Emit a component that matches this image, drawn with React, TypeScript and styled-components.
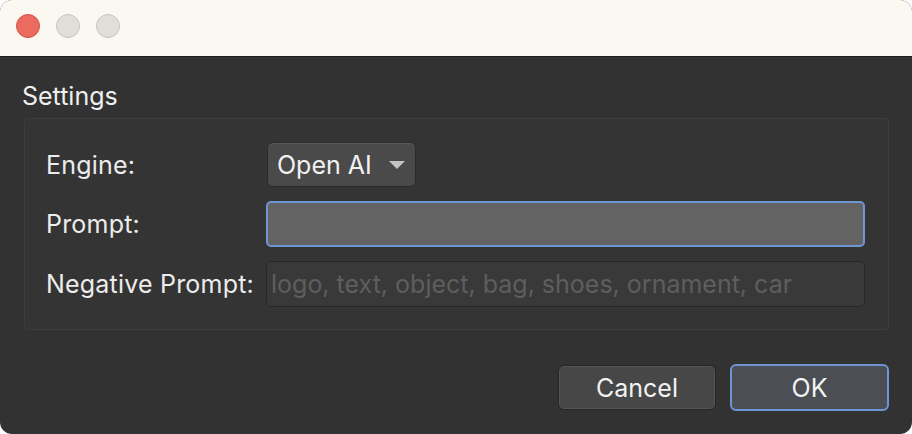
import React from "react";
import styled, { createGlobalStyle } from "styled-components";

const Global = createGlobalStyle`
  html, body { margin: 0; padding: 0; background: #ffffff; }
  body { font-family: Inter, "Noto Sans", "Liberation Sans", sans-serif; }
`;

const Window = styled.div`
  width: 912px;
  height: 434px;
  border-radius: 12px;
  overflow: hidden;
  background: #323232;
  display: flex;
  flex-direction: column;
`;

const TitleBar = styled.div`
  height: 57px;
  flex: none;
  background: #fbf7f1;
  border-bottom: 1px solid #1d1d1d;
  display: flex;
  align-items: center;
  gap: 16px;
  padding-left: 16px;
  box-sizing: border-box;
  padding-bottom: 4px;
`;

const Light = styled.span<{ $c: string; $b: string }>`
  width: 24px;
  height: 24px;
  border-radius: 50%;
  background: ${(p) => p.$c};
  box-sizing: border-box;
  border: 1px solid ${(p) => p.$b};
`;

const Body = styled.div`
  flex: 1;
  padding: 0 23px 0 24px;
  display: flex;
  flex-direction: column;
  color: #ececec;
`;

const GroupTitle = styled.div`
  font-size: 25px;
  line-height: 30px;
  margin: 24px 0 7px -2px;
  color: #efefef;
`;

const Group = styled.div`
  border: 1px solid #3d3d3d;
  background: #343434;
  border-radius: 4px;
  padding: 23px 23px 22px 21px;
  display: grid;
  grid-template-columns: 220px 1fr;
  row-gap: 14px;
  align-items: center;
`;

const Label = styled.div`
  font-size: 25px;
  letter-spacing: 0.2px;
  color: #ececec;
`;

const Select = styled.div`
  justify-self: start;
  width: 149px;
  height: 45px;
  box-sizing: border-box;
  border-radius: 6px;
  background: #4a4a4a;
  border: 1px solid #2a2a2a;
  box-shadow: inset 0 1px 0 #5a5a5a;
  display: flex;
  align-items: center;
  justify-content: space-between;
  padding: 0 10px 0 9px;
  font-size: 25px;
  color: #f2f2f2;
  margin-left: 1px;
`;

const Arrow = styled.span`
  width: 0;
  height: 0;
  border-left: 8px solid transparent;
  border-right: 8px solid transparent;
  border-top: 8px solid #c4c4c4;
  margin-top: 1px;
`;

const Field = styled.input<{ $focus?: boolean }>`
  height: 46px;
  box-sizing: border-box;
  width: 100%;
  border-radius: 5px;
  font-family: inherit;
  font-size: 25px;
  padding: 0 4px;
  outline: none;
  color: #eee;
  background: ${(p) => (p.$focus ? "#636363" : "#393939")};
  border: ${(p) => (p.$focus ? "2px solid #6e96d3" : "1px solid #272727")};
  &::placeholder { color: #5e5e5e; }
`;

const Footer = styled.div`
  display: flex;
  justify-content: flex-end;
  gap: 14px;
  margin-top: 34px;
`;

const Button = styled.button<{ $primary?: boolean }>`
  width: ${(p) => (p.$primary ? "159px" : "158px")};
  height: ${(p) => (p.$primary ? "47px" : "45px")};
  margin-top: ${(p) => (p.$primary ? "0" : "1px")};
  box-sizing: border-box;
  border-radius: 6px;
  font-family: inherit;
  font-size: 25px;
  color: #f2f2f2;
  background: ${(p) => (p.$primary ? "#4b4e55" : "#474747")};
  border: ${(p) => (p.$primary ? "2px solid #6e96d3" : "1px solid #262626")};
  box-shadow: ${(p) => (p.$primary ? "none" : "inset 0 0 0 1px #555")};
`;

export default function App() {
  return (
    <>
      <Global />
      <Window>
        <TitleBar>
          <Light $c="#ec6b5f" $b="#d35446" />
          <Light $c="#e1ddd7" $b="#c9c4be" />
          <Light $c="#e1ddd7" $b="#c9c4be" />
        </TitleBar>
        <Body>
          <GroupTitle>Settings</GroupTitle>
          <Group>
            <Label>Engine:</Label>
            <Select>
              <span>Open AI</span>
              <Arrow />
            </Select>
            <Label>Prompt:</Label>
            <Field $focus />
            <Label>Negative Prompt:</Label>
            <Field placeholder="logo, text, object, bag, shoes, ornament, car" />
          </Group>
          <Footer>
            <Button>Cancel</Button>
            <Button $primary>OK</Button>
          </Footer>
        </Body>
      </Window>
    </>
  );
}
